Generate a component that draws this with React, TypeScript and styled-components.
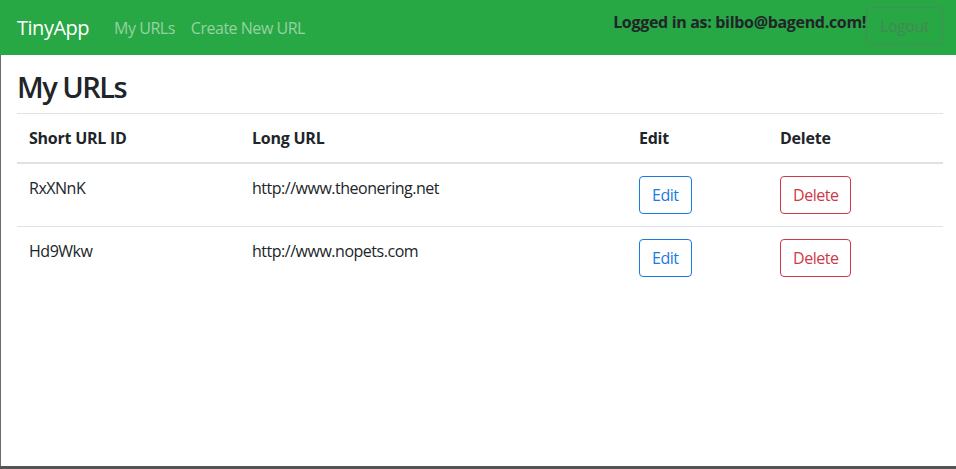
import styled, { createGlobalStyle } from "styled-components";

type Url = { id: string; longURL: string };

const urls: Url[] = [
  { id: "RxXNnK", longURL: "http://www.theonering.net" },
  { id: "Hd9Wkw", longURL: "http://www.nopets.com" },
];

export default function App() {
  return (
    <Page>
      <GlobalStyle />
      <Navbar>
        <Brand href="#">TinyApp</Brand>
        <NavLinks>
          <NavLink href="#">My URLs</NavLink>
          <NavLink href="#">Create New URL</NavLink>
        </NavLinks>
        <UserArea>
          <LoggedIn>Logged in as: bilbo@bagend.com!</LoggedIn>
          <LogoutButton type="button">Logout</LogoutButton>
        </UserArea>
      </Navbar>
      <Main>
        <Heading>My URLs</Heading>
        <Table>
          <colgroup>
            <col style={{ width: 223 }} />
            <col style={{ width: 387 }} />
            <col style={{ width: 141 }} />
            <col />
          </colgroup>
          <thead>
            <tr>
              <Th>Short URL ID</Th>
              <Th>Long URL</Th>
              <Th>Edit</Th>
              <Th>Delete</Th>
            </tr>
          </thead>
          <tbody>
            {urls.map((url) => (
              <tr key={url.id}>
                <Td>{url.id}</Td>
                <Td>{url.longURL}</Td>
                <Td>
                  <OutlineButton $variant="primary">Edit</OutlineButton>
                </Td>
                <Td>
                  <OutlineButton $variant="danger">Delete</OutlineButton>
                </Td>
              </tr>
            ))}
          </tbody>
        </Table>
      </Main>
    </Page>
  );
}

const GlobalStyle = createGlobalStyle`
  * { box-sizing: border-box; }
  html, body {
    margin: 0;
    padding: 0;
    font-family: "Open Sans", "Noto Sans", sans-serif;
    font-size: 16px;
    letter-spacing: -0.03em;
    color: #212529;
    background: #fff;
  }
  button { letter-spacing: inherit; }
`;

const Page = styled.div`
  min-height: 100vh;
  display: flex;
  flex-direction: column;
  border-bottom: 3px solid #555;
`;

const Navbar = styled.nav`
  height: 55px;
  background-color: #28a745;
  display: flex;
  align-items: center;
  padding: 0 13px 0 17px;
`;

const Brand = styled.a`
  color: #fff;
  font-size: 20px;
  text-decoration: none;
  margin-right: 25px;
`;

const NavLinks = styled.div`
  display: flex;
  gap: 16px;
`;

const NavLink = styled.a`
  color: rgba(255, 255, 255, 0.5);
  text-decoration: none;
  font-size: 16px;
`;

const UserArea = styled.div`
  margin-left: auto;
  display: flex;
  align-items: center;
`;

const LoggedIn = styled.span`
  font-weight: 700;
  font-size: 16px;
  line-height: 24px;
  letter-spacing: -0.02em;
  color: #212529;
  margin-bottom: 11px;
`;

const LogoutButton = styled.button`
  font-family: inherit;
  font-size: 16px;
  height: 38px;
  padding: 0 13px;
  background: transparent;
  color: rgba(90, 110, 100, 0.55);
  border: 1px solid rgba(100, 115, 110, 0.5);
  border-radius: 4px;
  margin-bottom: 4px;
`;

const Main = styled.main`
  flex: 1;
  border-left: 1px solid #6b6b6b;
  padding: 14px 13px 0 16px;
`;

const Heading = styled.h2`
  font-size: 29px;
  font-weight: 600;
  letter-spacing: -1.5px;
  line-height: 36px;
  margin: 0 0 8px;
`;

const Table = styled.table`
  width: 100%;
  border-collapse: collapse;
  table-layout: fixed;
`;

const Th = styled.th`
  text-align: left;
  font-weight: 700;
  letter-spacing: -0.015em;
  padding: 12px;
  line-height: 24px;
  border-top: 1px solid #dee2e6;
  border-bottom: 2px solid #dee2e6;
`;

const Td = styled.td`
  padding: 12px;
  line-height: 24px;
  vertical-align: top;
  border-bottom: 1px solid #dee2e6;
  tr:last-child > & {
    border-bottom: none;
  }
`;

const OutlineButton = styled.button<{ $variant: "primary" | "danger" }>`
  font-family: inherit;
  font-size: 16px;
  line-height: 24px;
  padding: 6px 12px;
  background: transparent;
  border-radius: 4px;
  color: ${(p) => (p.$variant === "primary" ? "#1a7ae0" : "#cc3a48")};
  border: 1px solid ${(p) => (p.$variant === "primary" ? "#1a7ae0" : "#cc3a48")};
`;
